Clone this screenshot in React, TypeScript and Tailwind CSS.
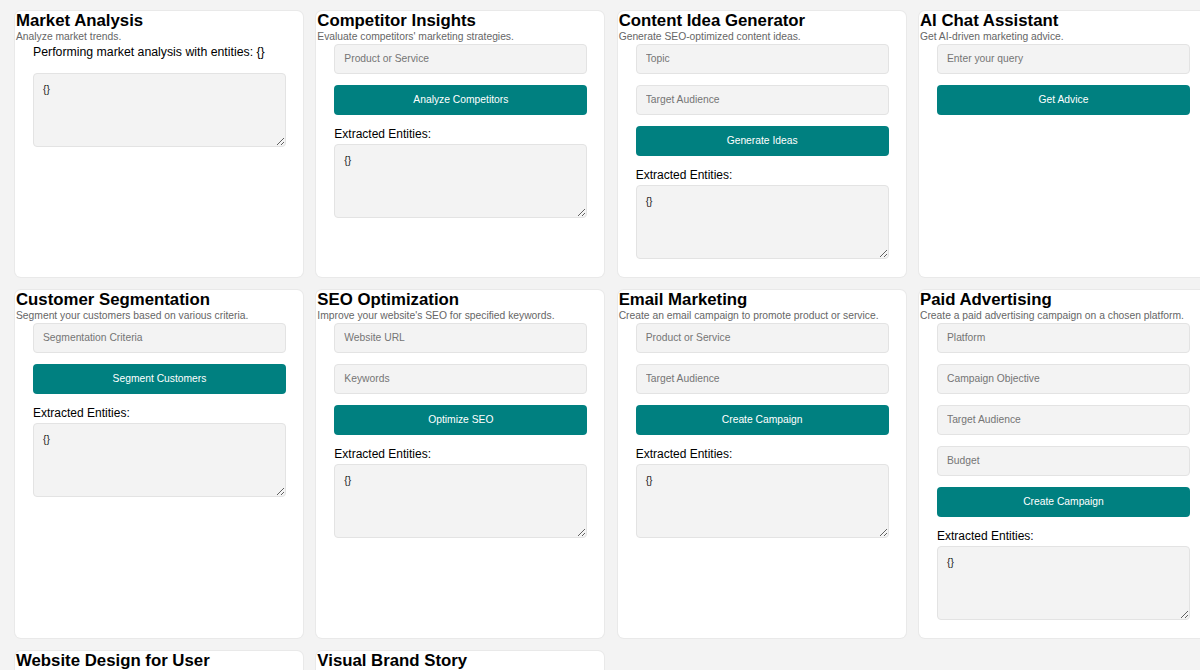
import React from "react";

type Tool = {
  title: string;
  desc?: string;
  fields?: string[];
  button?: string;
  intro?: string;
  entities?: boolean;
};

const tools: Tool[] = [
  {
    title: "Market Analysis",
    desc: "Analyze market trends.",
    intro: "Performing market analysis with entities: {}",
  },
  {
    title: "Competitor Insights",
    desc: "Evaluate competitors' marketing strategies.",
    fields: ["Product or Service"],
    button: "Analyze Competitors",
    entities: true,
  },
  {
    title: "Content Idea Generator",
    desc: "Generate SEO-optimized content ideas.",
    fields: ["Topic", "Target Audience"],
    button: "Generate Ideas",
    entities: true,
  },
  {
    title: "AI Chat Assistant",
    desc: "Get AI-driven marketing advice.",
    fields: ["Enter your query"],
    button: "Get Advice",
  },
  {
    title: "Customer Segmentation",
    desc: "Segment your customers based on various criteria.",
    fields: ["Segmentation Criteria"],
    button: "Segment Customers",
    entities: true,
  },
  {
    title: "SEO Optimization",
    desc: "Improve your website's SEO for specified keywords.",
    fields: ["Website URL", "Keywords"],
    button: "Optimize SEO",
    entities: true,
  },
  {
    title: "Email Marketing",
    desc: "Create an email campaign to promote product or service.",
    fields: ["Product or Service", "Target Audience"],
    button: "Create Campaign",
    entities: true,
  },
  {
    title: "Paid Advertising",
    desc: "Create a paid advertising campaign on a chosen platform.",
    fields: ["Platform", "Campaign Objective", "Target Audience", "Budget"],
    button: "Create Campaign",
    entities: true,
  },
  { title: "Website Design for User" },
  { title: "Visual Brand Story" },
];

function Card({ tool }: { tool: Tool }) {
  return (
    <div className="flex flex-col bg-white shadow-[0_0_0_1px_#e9e9e9] rounded-[6px] pb-[18px]">
      <h2 className="text-[16.8px] leading-[20px] font-bold text-black pl-px">
        {tool.title}
      </h2>
      {tool.desc && (
        <p className="text-[10.3px] leading-[12px] text-[#666] pl-px">
          {tool.desc}
        </p>
      )}

      <div className="flex flex-col pl-[18px] pr-[17px] pt-px">
        {tool.intro && (
          <>
            <p className="text-[12.3px] leading-[14px] text-black mt-[1px] mb-[14px]">
              {tool.intro}
            </p>
            <textarea
              readOnly
              value="{}"
              className="h-[74px] bg-[#f3f3f3] border border-[#e3e3e3] rounded-[4px] px-[9px] py-[8px] text-[10.3px] text-[#222] resize-y outline-none"
            />
          </>
        )}

        {tool.fields?.map((f, i) => (
          <input
            key={i}
            placeholder={f}
            className="h-[29.5px] mb-[11.5px] bg-[#f3f3f3] border border-[#e3e3e3] rounded-[4px] px-[9px] text-[10.3px] text-black placeholder:text-[#757575] outline-none"
          />
        ))}

        {tool.button && (
          <button className="h-[29.5px] bg-[#008080] text-white text-[10.3px] rounded-[4px]">
            {tool.button}
          </button>
        )}

        {tool.entities && (
          <>
            <div className="text-[12px] leading-[14px] text-black mt-[12.5px] mb-[3px]">
              Extracted Entities:
            </div>
            <textarea
              readOnly
              value="{}"
              className="h-[73.5px] bg-[#f3f3f3] border border-[#e3e3e3] rounded-[4px] px-[9px] py-[8px] text-[10.3px] text-[#222] resize-y outline-none"
            />
          </>
        )}
      </div>
    </div>
  );
}

export default function App() {
  return (
    <div
      className="h-screen overflow-hidden bg-[#f3f3f3]"
      style={{ fontFamily: '"Liberation Sans", Arial, sans-serif' }}
    >
      <div className="grid grid-cols-[repeat(4,288px)] gap-x-[13.33px] gap-y-[13.5px] pl-[15px] pt-[11px] w-max">
        {tools.map((t, i) => (
          <Card key={i} tool={t} />
        ))}
      </div>
    </div>
  );
}
